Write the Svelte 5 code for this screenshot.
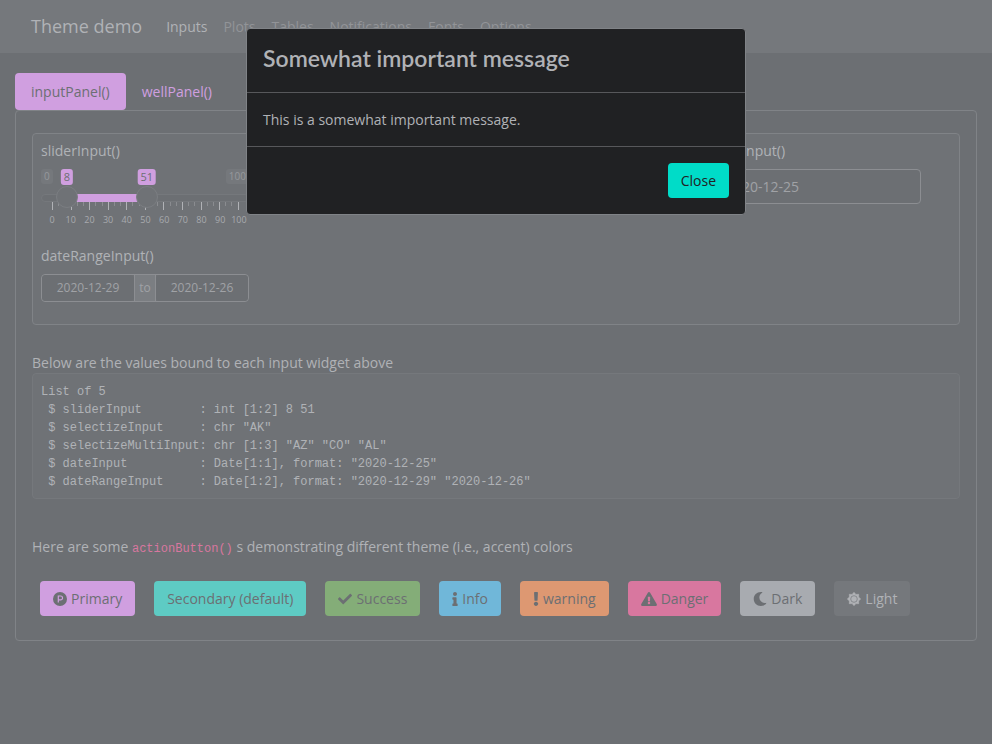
<script>
  const nav = ['Inputs', 'Plots', 'Tables', 'Notifications', 'Fonts', 'Options'];
  const marks = Array.from({ length: 11 }, (_, i) => i * 10);
  const ticks = Array.from({ length: 31 }, (_, i) => i);
  const trackX = (v) => 11 + (v / 100) * 186;

  let low = $state(8);
  let high = $state(51);
  let single = $state('AK');
  let multi = $state('AZ, CO, AL');
  let date = $state('2020-12-25');
  let start = $state('2020-12-29');
  let end = $state('2020-12-26');
  let open = $state(true);

  let summary = $derived(
    [
      'List of 5',
      ` $ sliderInput        : int [1:2] ${low} ${high}`,
      ` $ selectizeInput     : chr "${single}"`,
      ` $ selectizeMultiInput: chr [1:3] ${multi.split(', ').map((s) => `"${s}"`).join(' ')}`,
      ` $ dateInput          : Date[1:1], format: "${date}"`,
      ` $ dateRangeInput     : Date[1:2], format: "${start}" "${end}"`
    ].join('\n')
  );

  const buttons = [
    { name: 'primary', label: 'Primary' },
    { name: 'secondary', label: 'Secondary (default)' },
    { name: 'success', label: 'Success' },
    { name: 'info', label: 'Info' },
    { name: 'warning', label: 'warning' },
    { name: 'danger', label: 'Danger' },
    { name: 'dark', label: 'Dark' },
    { name: 'light', label: 'Light' }
  ];
</script>

<header class="navbar">
  <a class="brand" href="#top">Theme demo</a>
  <nav>
    {#each nav as item, i}
      <a href="#{item.toLowerCase()}" class:active={i === 0}>{item}</a>
    {/each}
  </nav>
</header>

<main>
  <nav class="tabs">
    <a class="tab active" href="#input-panel">inputPanel()</a>
    <a class="tab" href="#well-panel">wellPanel()</a>
  </nav>

  <section class="content">
    <div class="panel">
      <div class="field">
        <label for="low">sliderInput()</label>
        <div class="slider">
          <div class="tags">
            <span class="limit">0</span>
            <span class="limit">100</span>
            <output class="value" style="left: {trackX(low)}px">{low}</output>
            <output class="value" style="left: {trackX(high)}px">{high}</output>
          </div>
          <div class="track">
            <div class="bar" style="left: {trackX(low)}px; width: {trackX(high) - trackX(low)}px"></div>
            <input id="low" type="range" min="0" max="100" bind:value={low} />
            <input type="range" min="0" max="100" aria-label="Upper value" bind:value={high} />
          </div>
          <div class="ticks">
            {#each ticks as t}<i class:major={t % 3 === 0}></i>{/each}
          </div>
          <div class="scale">
            {#each marks as m}<span>{m}</span>{/each}
          </div>
        </div>
      </div>
      <div class="field">
        <label for="single">selectizeInput()</label>
        <select id="single" bind:value={single}><option>AK</option><option>AL</option></select>
      </div>
      <div class="field">
        <label for="multi">selectizeMultiInput()</label>
        <input id="multi" type="text" bind:value={multi} />
      </div>
      <div class="field">
        <label for="date">dateInput()</label>
        <input id="date" type="text" bind:value={date} />
      </div>
      <div class="field">
        <label for="start">dateRangeInput()</label>
        <div class="range">
          <input id="start" type="text" bind:value={start} />
          <span>to</span>
          <input type="text" aria-label="End date" bind:value={end} />
        </div>
      </div>
    </div>

    <p class="intro">Below are the values bound to each input widget above</p>
    <pre>{summary}</pre>

    <p class="accent">Here are some <code>actionButton()</code> s demonstrating different theme (i.e., accent) colors</p>
    <div class="buttons">
      {#each buttons as b}
        <button type="button" class="btn {b.name}">
          {#if b.name === 'primary'}
            <svg width="14" height="14" viewBox="0 0 14 14"><circle cx="7" cy="7" r="7" fill="currentColor" /><path d="M5.3 10.4V4h2.3a1.9 1.9 0 0 1 0 3.9H5.3" fill="none" stroke="#d09fe0" stroke-width="1.2" /></svg>
          {:else if b.name === 'success'}
            <svg width="14" height="14" viewBox="0 0 512 512"><path fill="currentColor" d="M173.900 439.400 7.500 273c-10-10-10-26.200 0-36.200l36.200-36.200c10-10 26.200-10 36.200 0L192 312.700 432.100 72.600c10-10 26.200-10 36.200 0l36.200 36.200c10 10 10 26.200 0 36.200L210.100 439.400c-10 10-26.200 10-36.200 0z" /></svg>
          {:else if b.name === 'info'}
            <svg width="6" height="14" viewBox="0 0 192 512"><path fill="currentColor" d="M20 424.200h20V279.800H20c-11 0-20-9-20-20V212c0-11 9-20 20-20h112c11 0 20 9 20 20v212.200h20c11 0 20 9 20 20V492c0 11-9 20-20 20H20c-11 0-20-9-20-20v-47.800c0-11 9-20 20-20zM96 0C56.200 0 24 32.200 24 72s32.200 72 72 72 72-32.200 72-72S135.800 0 96 0z" /></svg>
          {:else if b.name === 'warning'}
            <svg width="6" height="14" viewBox="0 0 192 512"><path fill="currentColor" d="M176 432c0 44.100-35.900 80-80 80s-80-35.900-80-80 35.900-80 80-80 80 35.900 80 80zM25.300 25.200l13.600 272c.6 12.800 11.200 22.800 24 22.800h66.300c12.800 0 23.300-10 24-22.800l13.600-272C167.400 11.500 156.500 0 142.800 0H49.200C35.500 0 24.600 11.500 25.300 25.200z" /></svg>
          {:else if b.name === 'danger'}
            <svg width="16" height="14" viewBox="0 0 576 512"><path fill="currentColor" d="M569.500 440c18.500 32-4.700 72-41.600 72H48.100c-36.900 0-60-40.100-41.600-72L246.400 24c18.500-32 64.700-32 83.200 0zM288 354a46 46 0 1 0 0 92 46 46 0 0 0 0-92zm-43.700-165.300 7.400 136c.4 6.400 5.600 11.300 12 11.300h48.600c6.400 0 11.600-5 12-11.300l7.400-136c.4-6.900-5.100-12.700-12-12.700h-63.400c-6.900 0-12.400 5.800-12 12.700z" /></svg>
          {:else if b.name === 'dark'}
            <svg width="14" height="14" viewBox="0 0 512 512"><path fill="currentColor" d="M283.200 512c79 0 151.100-35.900 198.900-94.800 7.100-8.700-.6-21.400-11.600-19.400C346.300 421.500 232.200 326.200 232.200 200.700c0-72.200 38.700-138.700 101.500-174.400 9.700-5.500 7.300-20.200-3.800-22.200A258 258 0 0 0 283.200 0c-141.300 0-256 114.500-256 256 0 141.300 114.500 256 256 256z" /></svg>
          {:else if b.name === 'light'}
            <svg width="14" height="14" viewBox="0 0 14 14">
              <path fill="currentColor" stroke="currentColor" stroke-width=".6" stroke-linejoin="round" d="M7 .3 8.900 2.400 11.700 2.300 11.600 5.100 13.700 7 11.600 8.900 11.700 11.700 8.900 11.600 7 13.700 5.100 11.600 2.300 11.700 2.400 8.900.3 7 2.400 5.100 2.300 2.300 5.100 2.400z" />
              <circle cx="7" cy="7" r="3.300" fill="none" stroke="#75787c" stroke-width=".7" />
            </svg>
          {/if}
          <span>{b.label}</span>
        </button>
      {/each}
    </div>
  </section>
</main>

{#if open}
  <div class="modal" role="dialog" aria-modal="true" aria-labelledby="modal-title">
    <h4 id="modal-title">Somewhat important message</h4>
    <p>This is a somewhat important message.</p>
    <footer>
      <button type="button" class="btn close" onclick={() => (open = false)}>Close</button>
    </footer>
  </div>
{/if}

<style>
  :global(body) {
    background: #6c6f73;
    color: #b0b2b6;
    font: 14px/21px 'Open Sans', sans-serif;
  }
  :global(#app *) { box-sizing: border-box; }
  a { text-decoration: none; color: inherit; }
  p { margin: 0; }

  .navbar {
    display: flex;
    align-items: center;
    gap: 16px;
    padding: 8px 31px;
    background: #75787c;
  }
  .brand { font-size: 18px; line-height: 37px; }
  .navbar nav { display: flex; }
  .navbar nav a { padding: 8px; color: #929498; }
  .navbar nav a.active { color: #b0b2b6; }

  main { padding: 20px 15px; }
  .tabs { display: flex; }
  .tab { padding: 8px 16px; border-radius: 4px; color: #d09fe0; }
  .tab.active { background: #d09fe0; color: #6c6f73; }
  .content {
    padding: 22px 16px 24px;
    border: 1px solid #808387;
    border-radius: 4px;
  }
  .panel {
    display: flex;
    flex-wrap: wrap;
    gap: 16px;
    padding: 6px 8px 22px;
    border: 1px solid #808387;
    border-radius: 4px;
    background: #6f7276;
  }
  .field { width: 208px; }
  .field label { display: block; margin-bottom: 8px; }
  .field > input,
  .field > select {
    display: block;
    width: 100%;
    height: 35px;
    padding: 6px 12px;
    border: 1px solid #8c8e92;
    border-radius: 4px;
    background: #6c6f73;
    color: #a0a2a6;
    font: inherit;
  }

  .slider { height: 60px; }
  .tags {
    position: relative;
    display: flex;
    justify-content: space-between;
    align-items: flex-start;
    height: 25px;
  }
  .limit, .value { padding: 0 3px; border-radius: 3px; }
  .limit { background: #75787c; color: #96989c; font-size: 10px; line-height: 15px; }
  .value {
    position: absolute;
    top: 0;
    transform: translateX(-50%);
    background: #d09fe0;
    color: #6c6f73;
    font-size: 11px;
    line-height: 16px;
  }
  .track {
    position: relative;
    height: 8px;
    border: 1px solid #75787c;
    border-radius: 8px;
    background: #6c6f73;
  }
  .bar { position: absolute; top: -1px; height: 8px; background: #d09fe0; }
  .track input {
    position: absolute;
    left: -1px;
    top: -9px;
    width: 208px;
    height: 22px;
    margin: 0;
    appearance: none;
    background: none;
    pointer-events: none;
  }
  .track input::-webkit-slider-thumb {
    appearance: none;
    width: 22px;
    height: 22px;
    border: 1px solid #7b7e82;
    border-radius: 50%;
    background: #6f7276;
    pointer-events: auto;
  }
  .ticks { display: flex; justify-content: space-between; height: 12px; padding: 0 10px 0 11px; }
  .ticks i { width: 1px; height: 4px; background: #8a8c90; }
  .ticks i.major { height: 8px; background: #b0b2b6; }
  .scale { display: flex; justify-content: space-between; padding: 0 10px 0 11px; }
  .scale span {
    display: flex;
    justify-content: center;
    width: 0;
    color: #a8aaae;
    font-size: 9px;
    line-height: 11px;
  }

  .range { display: flex; border: 1px solid #8c8e92; border-radius: 4px; height: 28px; }
  .range input {
    flex: 1;
    min-width: 0;
    padding: 0;
    border: 0;
    background: #6c6f73;
    border-radius: 4px;
    color: #a0a2a6;
    font: 12px/18px 'Open Sans', sans-serif;
    text-align: center;
  }
  .range span {
    width: 22px;
    border: solid #8c8e92;
    border-width: 0 1px;
    background: #7b7e82;
    color: #a0a2a6;
    font-size: 12px;
    line-height: 26px;
    text-align: center;
  }

  .intro { margin-top: 27px; }
  pre {
    margin: 0 0 37px;
    padding: 9px 8px 7px;
    border: 1px solid #75787c;
    border-radius: 4px;
    background: #6f7276;
    font: 12px/18px 'Liberation Mono', monospace;
  }
  code { color: #d8779f; font: 12px/18px 'Liberation Mono', monospace; }

  .buttons { display: flex; flex-wrap: wrap; gap: 19px; padding: 23px 0 0 8px; }
  .btn {
    display: flex;
    align-items: center;
    gap: 4px;
    padding: 7px 13px;
    border: 0;
    border-radius: 4px;
    color: #6c6f73;
    font: 14px/21px 'Open Sans', sans-serif;
  }
  .primary { background: #d09fe0; }
  .secondary { background: #5ecbc4; }
  .success { background: #84ad78; }
  .info { background: #70b7d9; }
  .warning { background: #dd9872; }
  .danger { background: #d8779f; }
  .dark { background: #a8abb0; }
  .light { background: #75787c; color: #b0b2b6; }

  .modal {
    position: fixed;
    top: 28px;
    left: 50%;
    width: 500px;
    max-width: 100%;
    transform: translateX(-50%);
    border: 1px solid #808387;
    border-radius: 4px;
    background: #202123;
    color: #b0b2b6;
  }
  .modal h4 {
    margin: 0;
    padding: 16px 16px 21px;
    font: 600 23px/26px Lato, sans-serif;
  }
  .modal p, .modal footer { padding: 16px; border-top: 1px solid #57585b; }
  .modal footer { display: flex; justify-content: flex-end; }
  .close { background: #00dcc8; color: #202123; }
</style>
